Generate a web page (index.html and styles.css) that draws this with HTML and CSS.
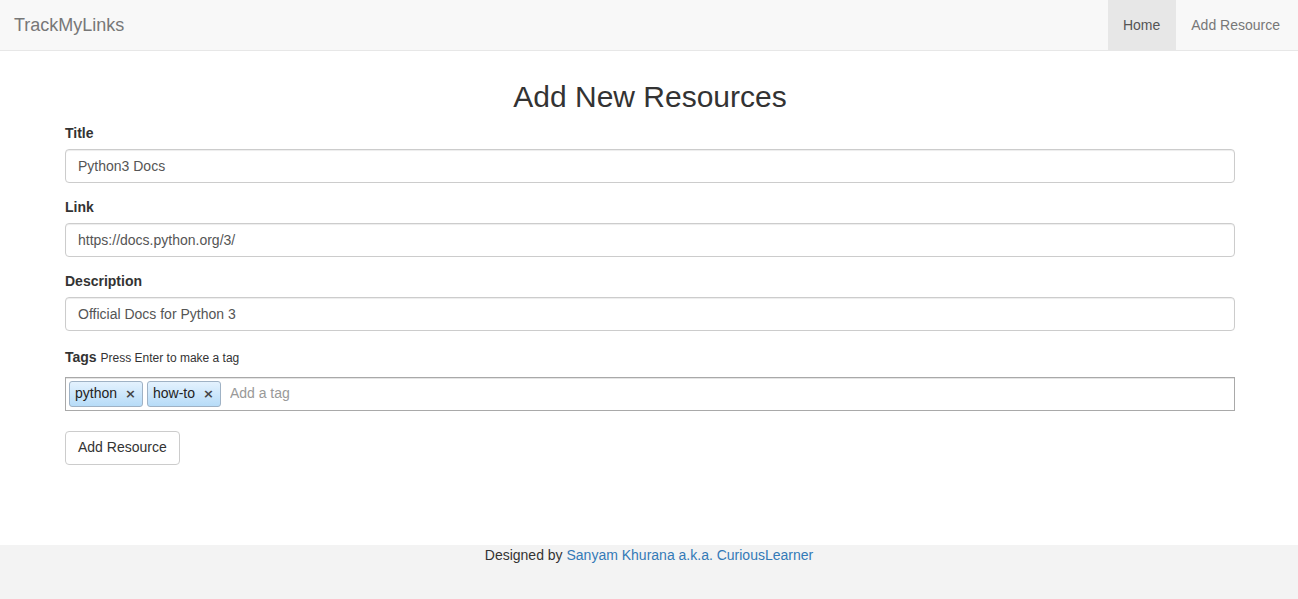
FILE: index.html
```html
<!DOCTYPE html>
<html>
<head>
<meta charset="utf-8">
<link rel="stylesheet" href="styles.css">
</head>
<body>
<div class="page">
<nav class="navbar">
  <a class="brand" href="#">TrackMyLinks</a>
  <ul class="nav">
    <li class="active"><a href="#">Home</a></li>
    <li><a href="#">Add Resource</a></li>
  </ul>
</nav>
<main class="container">
  <h2 class="title">Add New Resources</h2>
  <form>
    <div class="form-group">
      <label>Title</label>
      <input class="form-control" type="text" value="Python3 Docs">
    </div>
    <div class="form-group">
      <label>Link</label>
      <input class="form-control" type="text" value="https://docs.python.org/3/">
    </div>
    <div class="form-group">
      <label>Description</label>
      <input class="form-control" type="text" value="Official Docs for Python 3">
    </div>
    <div class="form-group tags-group">
      <label class="tags-label">Tags <small class="hint">Press Enter to make a tag</small></label>
      <ul class="tagit">
        <li class="tag"><span>python</span><span class="x">×</span></li>
        <li class="tag"><span>how-to</span><span class="x">×</span></li>
        <li class="tag-new"><input type="text" placeholder="Add a tag"></li>
      </ul>
    </div>
    <button type="button" class="btn">Add Resource</button>
  </form>
</main>
<footer class="footer">
  Designed by <a href="#">Sanyam Khurana a.k.a. CuriousLearner</a>
</footer>
</div>
</body>
</html>
```
FILE: styles.css
```css
* { box-sizing: border-box; }
html, body { margin: 0; padding: 0; height: 100%; }
body {
  font-family: "Liberation Sans", Arial, Helvetica, sans-serif;
  font-size: 14px;
  line-height: 1.42857;
  color: #333;
  background: #fff;
}
.page { display: flex; flex-direction: column; min-height: 100%; }
a { text-decoration: none; }

.navbar {
  height: 51px;
  background: #f8f8f8;
  border-bottom: 1px solid #e7e7e7;
  display: flex;
  justify-content: space-between;
  align-items: stretch;
}
.brand {
  font-size: 18px;
  line-height: 20px;
  color: #777;
  padding: 15px 15px 15px 14px;
}
.nav { list-style: none; margin: 0 3px 0 0; padding: 0; display: flex; }
.nav li a {
  display: block;
  padding: 15px 15px;
  line-height: 20px;
  color: #777;
  height: 50px;
}
.nav li.active a { background: #e7e7e7; color: #555; padding: 15px 16px 15px 15px; }

.container {
  width: 1170px;
  margin: 0 0 0 calc(50% - 584px);
  padding: 0;
  flex: 1;
}
.title {
  font-size: 30px;
  font-weight: 500;
  line-height: 33px;
  margin: 29px 0 11px;
  text-align: center;
  color: #333;
}
.form-group { margin-bottom: 15px; }
label {
  display: block;
  font-weight: bold;
  margin-bottom: 5px;
}
.tags-group { padding-top: 1px; }
.tags-label { height: 20px; line-height: 20px; margin-bottom: 10px; }
.hint { font-weight: normal; font-size: 12px; color: #333; }
.form-control {
  display: block;
  width: 100%;
  height: 34px;
  padding: 6px 12px;
  font: inherit;
  font-size: 14px;
  color: #555;
  background: #fff;
  border: 1px solid #ccc;
  border-radius: 4px;
  box-shadow: inset 0 1px 1px rgba(0,0,0,.075);
}
.tagit {
  list-style: none;
  margin: 0;
  padding: 3px 3px;
  height: 34px;
  display: flex;
  align-items: center;
  gap: 4px;
  border: 1px solid #a9a9a9;
  box-shadow: inset 0 1px 0 #e5e5e5;
  background: #fff;
}
.tag {
  display: flex;
  align-items: center;
  height: 26px;
  padding: 1px 6px 0 5px;
  border: 1px solid #9fb2c5;
  border-radius: 3px;
  background: linear-gradient(#e4f2fe, #b7dcf8);
  color: #222;
  font-size: 14px;
}
.tag .x {
  margin-left: 8px;
  font-family: "DejaVu Sans", sans-serif;
  font-weight: bold;
  font-size: 13px;
  color: #444;
}
.tag-new input {
  border: 0;
  outline: 0;
  font: inherit;
  font-size: 14px;
  padding: 1px 0 0 5px;
  width: 200px;
  background: transparent;
}
.tag-new input::placeholder { color: #999; }
.btn {
  margin-top: 5px;
  font: inherit;
  font-size: 14px;
  color: #333;
  background: #fff;
  border: 1px solid #ccc;
  border-radius: 4px;
  padding: 6px 12px;
  height: 34px;
}
.footer {
  background: #f3f3f3;
  height: 54px;
  text-align: center;
  line-height: 20px;
  color: #333;
}
.footer a { color: #337ab7; }
```
